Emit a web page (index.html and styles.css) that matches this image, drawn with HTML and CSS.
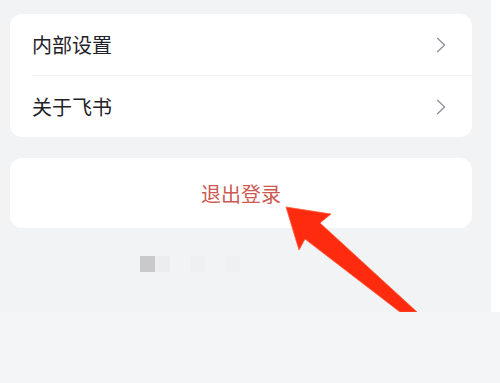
FILE: index.html
```html
<!DOCTYPE html>
<html lang="zh">
<head>
<meta charset="utf-8">
<title>设置</title>
<link rel="stylesheet" href="styles.css">
</head>
<body>
<div class="page">
  <div class="top">
    <div class="screen">
      <div class="card list">
        <div class="row">
          <span class="label">内部设置</span>
          <svg class="chev" width="10" height="16" viewBox="0 0 10 16"><path d="M1.5 1.2 L8.6 8 L1.5 14.8" fill="none" stroke="#8f959e" stroke-width="1.4" stroke-linecap="round" stroke-linejoin="round"/></svg>
        </div>
        <div class="divider"></div>
        <div class="row">
          <span class="label">关于飞书</span>
          <svg class="chev" width="10" height="16" viewBox="0 0 10 16"><path d="M1.5 1.2 L8.6 8 L1.5 14.8" fill="none" stroke="#8f959e" stroke-width="1.4" stroke-linecap="round" stroke-linejoin="round"/></svg>
        </div>
      </div>
      <div class="card logout">退出登录</div>
      <div class="blur">
        <span class="px px-dark"></span>
        <span class="px px-light"></span>
        <span class="px px-faint"></span>
        <span class="px px-faint"></span>
      </div>
      <svg class="arrow" width="491" height="312" viewBox="0 0 491 312">
        <polygon points="286,207 331,214 320,223 417,312 400,312 305,239 299,250" fill="#ff2b0f" stroke="#ff5a3c" stroke-width="0.8" stroke-linejoin="round"/>
      </svg>
    </div>
    <div class="edge"></div>
  </div>
  <div class="bottom"></div>
</div>
</body>
</html>
```
FILE: styles.css
```css
html, body {
  margin: 0;
  padding: 0;
  background: #f4f5f7;
}
.page {
  width: 500px;
  height: 383px;
  overflow: hidden;
  font-family: "Noto Sans CJK SC", "Noto Sans", sans-serif;
}
.top {
  display: flex;
  height: 312px;
}
.screen {
  position: relative;
  width: 491px;
  height: 312px;
  background: #f2f3f5;
  padding: 14px 0 0 10px;
  box-sizing: border-box;
  overflow: hidden;
}
.edge {
  flex: 1;
  background: #ffffff;
}
.card {
  width: 462px;
  background: #ffffff;
  border-radius: 12px;
}
.list {
  display: flex;
  flex-direction: column;
}
.row {
  height: 61px;
  display: flex;
  align-items: center;
  justify-content: space-between;
  padding: 0 26px 0 22px;
}
.label {
  font-size: 20px;
  color: #1f2329;
  line-height: 1;
}
.chev {
  display: block;
}
.divider {
  height: 1px;
  margin-left: 22px;
  background: #eff0f1;
}
.logout {
  margin-top: 21px;
  height: 70px;
  display: flex;
  align-items: center;
  justify-content: center;
  font-size: 20px;
  color: #cc5a53;
}
.blur {
  display: flex;
  margin: 28px 0 0 130px;
  height: 16px;
}
.px {
  width: 15px;
  height: 16px;
}
.px-dark {
  background: #c9c9cb;
}
.px-light {
  background: #ecedef;
}
.px-faint {
  background: #eff0f2;
  margin-left: 20px;
}
.arrow {
  position: absolute;
  left: 0;
  top: 0;
}
.bottom {
  height: 71px;
  background: #f4f5f7;
}
```
